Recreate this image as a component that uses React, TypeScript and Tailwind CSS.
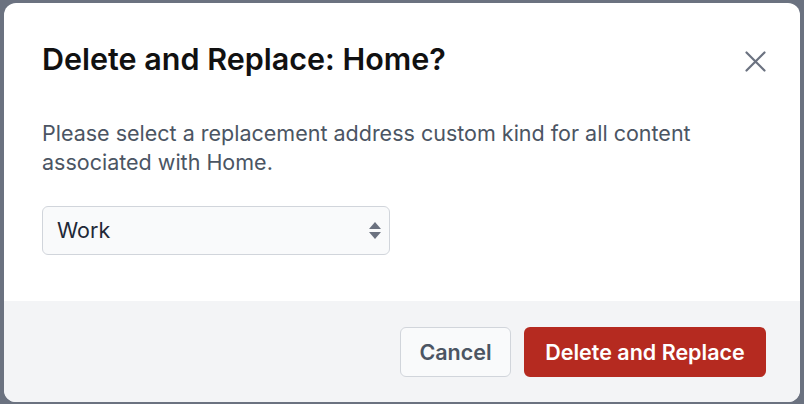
import { useState } from 'react'

export default function App() {
  const [kind, setKind] = useState('Work')

  return (
    <div
      className="h-[404px] w-[804px] overflow-hidden bg-[#6b7280] pl-[4px] pt-[3px]"
      style={{ fontFamily: 'Inter, "Noto Sans", sans-serif' }}
    >
      <div className="flex h-[399px] w-[796px] flex-col overflow-hidden rounded-[12px] bg-white">
        {/* body */}
        <div className="flex-1 pl-[38px] pr-[34px] pt-[37px]">
          <div className="flex items-start justify-between">
            <h2 className="text-[30.5px] font-semibold leading-[38px] text-[#111111]">
              Delete and Replace: Home?
            </h2>
            <button className="mt-[11px] text-[#6b7280]" aria-label="Close">
              <svg width="21" height="21" viewBox="0 0 21 21" fill="none" stroke="currentColor" strokeWidth="2.2" strokeLinecap="round">
                <path d="M1.5 1.5 L19.5 19.5 M19.5 1.5 L1.5 19.5" />
              </svg>
            </button>
          </div>
          <p className="mt-[41px] w-[720px] text-[21.5px] leading-[29px] text-[#4b5563]">
            Please select a replacement address custom kind for all content associated with Home.
          </p>
          <div className="relative mt-[29px] w-[348px]">
            <select
              value={kind}
              onChange={(e) => setKind(e.target.value)}
              className="h-[49px] w-full appearance-none rounded-[6px] border border-[#d1d5db] bg-[#f9fafb] pl-[14px] text-[21.5px] text-[#1f2937] outline-none"
            >
              <option>Work</option>
              <option>Home</option>
              <option>Other</option>
            </select>
            <svg
              className="pointer-events-none absolute right-[9px] top-[16px]"
              width="12"
              height="17"
              viewBox="0 0 12 17"
              fill="#6b7280"
            >
              <path d="M6 0 L12 7 L0 7 Z" />
              <path d="M0 10 L12 10 L6 17 Z" />
            </svg>
          </div>
        </div>
        {/* footer */}
        <div className="flex h-[101px] items-center justify-end gap-[13px] bg-[#f3f4f6] pr-[34px] pt-[1px]">
          <button className="h-[50px] w-[111px] rounded-[6px] border border-[#d1d5db] bg-[#f9fafb] text-[21.5px] font-semibold text-[#4b5563]">
            Cancel
          </button>
          <button className="h-[50px] w-[242px] rounded-[6px] bg-[#b52a20] text-[21.5px] font-semibold text-white">
            Delete and Replace
          </button>
        </div>
      </div>
    </div>
  )
}
